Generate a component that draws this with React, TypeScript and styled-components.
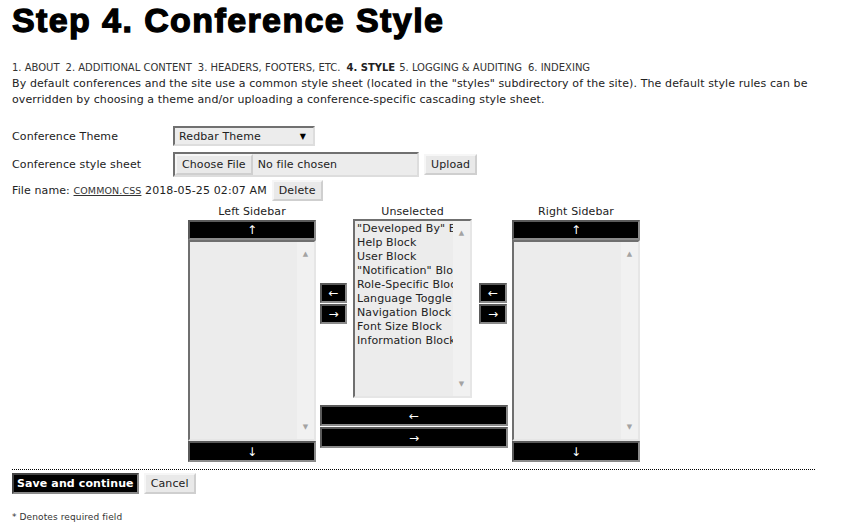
import React from 'react';
import styled, { createGlobalStyle } from 'styled-components';

const GlobalStyle = createGlobalStyle`
  html, body {
    margin: 0;
    padding: 0;
    background: #fff;
  }
  body {
    font-family: 'DejaVu Sans', Verdana, sans-serif;
    font-size: 11px;
    letter-spacing: 0.11px;
    color: #222;
  }
`;

const Page = styled.div`
  width: 846px;
  height: 522px;
  overflow: hidden;
  padding: 0 12px;
  box-sizing: border-box;
`;

const Title = styled.h1`
  margin: 0;
  padding-top: 1px;
  font-family: 'Liberation Sans', Arial, sans-serif;
  font-weight: 900;
  font-size: 34px;
  line-height: 38px;
  color: #000;
  -webkit-text-stroke: 1.3px #000;
  letter-spacing: 1.4px;
`;

const Steps = styled.div`
  margin-top: 23px;
  font-size: 10px;
  letter-spacing: 0;
  color: #333;
  line-height: 12px;

  span {
    margin-right: 6px;
  }
  b {
    color: #222;
    margin-right: 4px;
  }
`;

const Intro = styled.p`
  margin: 2px 0 0;
  line-height: 16px;
  color: #222;
`;

const Form = styled.div`
  margin-top: 18px;
  display: grid;
  grid-template-columns: 161px auto;
  row-gap: 6px;
  align-items: center;
`;

const Label = styled.div`
  color: #222;
`;

const Inline = styled.div`
  display: flex;
  align-items: center;
  gap: 5px;
`;

const Select = styled.div`
  width: 142px;
  height: 20px;
  box-sizing: border-box;
  border: 2px solid #ddd;
  border-top-color: #707070;
  border-left-color: #707070;
  background: #ececec;
  display: flex;
  align-items: center;
  justify-content: space-between;
  padding: 0 7px 0 4px;
  color: #222;

  &::after {
    content: '▼';
    font-size: 8px;
    color: #000;
  }
`;

const FileBox = styled.div`
  width: 246px;
  height: 25px;
  box-sizing: border-box;
  border: 2px solid #ddd;
  border-top-color: #707070;
  border-left-color: #707070;
  background: #ececec;
  display: flex;
  align-items: center;
  gap: 5px;
`;

const GrayButton = styled.button`
  font-family: 'DejaVu Sans', Verdana, sans-serif;
  font-size: 11px;
  letter-spacing: 0.11px;
  color: #222;
  height: 21px;
  padding: 0 5px;
  background: #e9e9e9;
  border: 2px solid #cfcfcf;
  border-top-color: #f6f6f6;
  border-left-color: #f6f6f6;
  cursor: pointer;
`;

const FileRow = styled.div`
  margin-top: 3px;
  display: flex;
  align-items: center;
  gap: 5px;
`;

const FileLink = styled.a`
  font-size: 9.5px;
  color: #333;
  text-decoration: underline;
`;

const Sidebars = styled.div`
  margin: 4px 0 0 176px;
  display: grid;
  grid-template-columns: 132px 33px 126px 33px 128px;
  grid-template-rows: 14px 186px auto;
`;

const ColTitle = styled.div<{ $col: number; $w: number }>`
  grid-column: ${(p) => p.$col};
  grid-row: 1;
  width: ${(p) => p.$w}px;
  text-align: center;
  color: #222;
  line-height: 14px;
  white-space: nowrap;
`;

const SideCol = styled.div<{ $col: number }>`
  grid-column: ${(p) => p.$col};
  grid-row: 2 / 4;
  width: 128px;
  display: flex;
  flex-direction: column;
  padding-top: 1px;
`;

const BlackButton = styled.button<{ $h?: number }>`
  display: block;
  width: 100%;
  height: ${(p) => p.$h ?? 21}px;
  background: #000;
  color: #fff;
  border: 2px solid #8a8a8a;
  border-top-color: #5a5a5a;
  border-left-color: #5a5a5a;
  font-family: 'DejaVu Sans', sans-serif;
  font-size: 12px;
  line-height: 1;
  padding: 0;
  cursor: pointer;
`;

const ListBox = styled.div<{ $h: number; $w?: number }>`
  position: relative;
  height: ${(p) => p.$h}px;
  width: ${(p) => (p.$w ? `${p.$w}px` : 'auto')};
  box-sizing: border-box;
  border: 2px solid #e6e6e6;
  border-top-color: #6f6f6f;
  border-left-color: #6f6f6f;
  background: #ececec;
  overflow: hidden;
  padding: 1px 0 0 2px;
  line-height: 14px;
  color: #222;
`;

const Track = styled.div`
  position: absolute;
  top: 0;
  right: 0;
  bottom: 0;
  width: 17px;
  background: #f1f1f1;
  display: flex;
  flex-direction: column;
  justify-content: space-between;
  align-items: center;
  padding: 5px 0;
  box-sizing: border-box;
  color: #a3a3a3;
  font-size: 7px;
`;

const Item = styled.div`
  white-space: nowrap;
  width: 97px;
  overflow: hidden;
`;

const ArrowStack = styled.div<{ $col: number; $w: number }>`
  grid-column: ${(p) => p.$col};
  grid-row: 2;
  width: ${(p) => p.$w}px;
  margin-top: 64px;
  display: flex;
  flex-direction: column;
  gap: 1px;
`;

const MidCol = styled.div`
  grid-column: 3;
  grid-row: 2;
`;

const WideButtons = styled.div`
  grid-column: 2 / 5;
  grid-row: 3;
  width: 188px;
  display: flex;
  flex-direction: column;
  gap: 1px;
`;

const Rule = styled.div`
  margin-top: 7px;
  width: 803px;
  border-top: 1px dotted #000;
`;

const Actions = styled.div`
  margin-top: 3px;
  display: flex;
  gap: 5px;
`;

const SaveButton = styled.button`
  height: 21px;
  padding: 0 3px;
  background: #000;
  color: #fff;
  font-family: 'DejaVu Sans', Verdana, sans-serif;
  font-weight: bold;
  font-size: 11px;
  letter-spacing: 0.11px;
  border: 2px solid #8a8a8a;
  border-top-color: #444;
  border-left-color: #444;
  cursor: pointer;
`;

const Note = styled.div`
  margin-top: 17px;
  font-size: 9px;
  line-height: 12px;
  color: #333;
`;

const Scroll: React.FC = () => (
  <Track>
    <span>▲</span>
    <span>▼</span>
  </Track>
);

const blocks = [
  '"Developed By" Block',
  'Help Block',
  'User Block',
  '"Notification" Block',
  'Role-Specific Block',
  'Language Toggle',
  'Navigation Block',
  'Font Size Block',
  'Information Block',
];

const Sidebar: React.FC<{ col: number }> = ({ col }) => (
  <SideCol $col={col}>
    <BlackButton $h={20}>↑</BlackButton>
    <ListBox $h={201}>
      <Scroll />
    </ListBox>
    <BlackButton $h={21}>↓</BlackButton>
  </SideCol>
);

const App: React.FC = () => {
  return (
    <Page>
      <GlobalStyle />
      <Title>Step 4. Conference Style</Title>
      <Steps>
        <span>1. ABOUT</span>
        <span>2. ADDITIONAL CONTENT</span>
        <span>3. HEADERS, FOOTERS, ETC.</span>
        <b>4. STYLE</b>
        <span>5. LOGGING &amp; AUDITING</span>
        <span>6. INDEXING</span>
      </Steps>
      <Intro>
        By default conferences and the site use a common style sheet (located in the "styles"
        subdirectory of the site). The default style rules can be overridden by choosing a theme
        and/or uploading a conference-specific cascading style sheet.
      </Intro>
      <Form>
        <Label>Conference Theme</Label>
        <Select>Redbar Theme</Select>
        <Label>Conference style sheet</Label>
        <Inline>
          <FileBox>
            <GrayButton>Choose File</GrayButton>
            <span>No file chosen</span>
          </FileBox>
          <GrayButton>Upload</GrayButton>
        </Inline>
      </Form>
      <FileRow>
        <span>
          File name: <FileLink>COMMON.CSS</FileLink> 2018-05-25 02:07 AM
        </span>
        <GrayButton>Delete</GrayButton>
      </FileRow>
      <Sidebars>
        <ColTitle $col={1} $w={128}>Left Sidebar</ColTitle>
        <ColTitle $col={3} $w={119}>Unselected</ColTitle>
        <ColTitle $col={5} $w={128}>Right Sidebar</ColTitle>
        <Sidebar col={1} />
        <ArrowStack $col={2} $w={27}>
          <BlackButton $h={20}>←</BlackButton>
          <BlackButton $h={20}>→</BlackButton>
        </ArrowStack>
        <MidCol>
          <ListBox $h={179} $w={119}>
            {blocks.map((b) => (
              <Item key={b}>{b}</Item>
            ))}
            <Scroll />
          </ListBox>
        </MidCol>
        <ArrowStack $col={4} $w={28}>
          <BlackButton $h={20}>←</BlackButton>
          <BlackButton $h={20}>→</BlackButton>
        </ArrowStack>
        <Sidebar col={5} />
        <WideButtons>
          <BlackButton $h={21}>←</BlackButton>
          <BlackButton $h={21}>→</BlackButton>
        </WideButtons>
      </Sidebars>
      <Rule />
      <Actions>
        <SaveButton>Save and continue</SaveButton>
        <GrayButton>Cancel</GrayButton>
      </Actions>
      <Note>* Denotes required field</Note>
    </Page>
  );
};

export default App;
